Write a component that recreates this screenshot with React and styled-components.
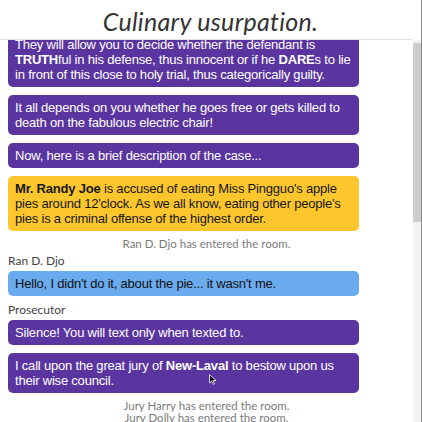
import React, { useEffect, useRef } from "react";
import styled, { createGlobalStyle, css } from "styled-components";

const messages = [
  {
    kind: "bubble",
    tone: "purple",
    text: (
      <>
        They will allow you to decide whether the defendant is <b>TRUTH</b>ful in
        his defense, thus innocent or if he <b>DARE</b>s to lie in front of this
        close to holy trial, thus categorically guilty.
      </>
    ),
  },
  {
    kind: "bubble",
    tone: "purple",
    text: "It all depends on you whether he goes free or gets killed to death on the fabulous electric chair!",
  },
  { kind: "bubble", tone: "purple", text: "Now, here is a brief description of the case..." },
  {
    kind: "bubble",
    tone: "yellow",
    text: (
      <>
        <b>Mr. Randy Joe</b> is accused of eating Miss Pingguo's apple pies around
        12'clock. As we all know, eating other people's pies is a criminal offense
        of the highest order.
      </>
    ),
  },
  { kind: "system", text: "Ran D. Djo has entered the room." },
  { kind: "label", text: "Ran D. Djo" },
  { kind: "bubble", tone: "blue", text: "Hello, I didn't do it, about the pie... it wasn't me." },
  { kind: "label", text: "Prosecutor" },
  { kind: "bubble", tone: "purple", text: "Silence! You will text only when texted to." },
  {
    kind: "bubble",
    tone: "purple",
    text: (
      <>
        I call upon the great jury of <b>New-Laval</b> to bestow upon us their wise
        council.
      </>
    ),
  },
  { kind: "system", text: "Jury Harry has entered the room." },
  { kind: "system", text: "Jury Dolly has entered the room." },
  { kind: "label", text: "Jury Harry" },
  { kind: "bubble", tone: "blue", text: "Guilty. Nobody eats a pie that fast and stays innocent." },
  { kind: "label", text: "Jury Dolly" },
  { kind: "bubble", tone: "blue", text: "I need to see the crumbs before I decide anything." },
  { kind: "label", text: "Prosecutor" },
  { kind: "bubble", tone: "purple", text: "The crumbs have been entered into evidence." },
  { kind: "bubble", tone: "purple", text: "Jury, please cast your verdict now." },
  { kind: "system", text: "Ran D. Djo has left the room." },
];

function App() {
  const scrollRef = useRef(null);

  // la conversation est deja un peu defilee dans la capture
  useEffect(() => {
    if (scrollRef.current) scrollRef.current.scrollTop = 8;
  }, []);

  return (
    <Page>
      <GlobalStyle />
      <Header>
        <Title>Culinary usurpation.</Title>
      </Header>
      <ChatArea>
        <ChatScroll ref={scrollRef}>
          <Messages>
            {messages.map((m, i) => {
              if (m.kind === "system") return <System key={i}>{m.text}</System>;
              if (m.kind === "label") return <Label key={i}>{m.text}</Label>;
              return (
                <Bubble key={i} $tone={m.tone}>
                  {m.text}
                </Bubble>
              );
            })}
          </Messages>
        </ChatScroll>
        <ScrollTrack>
          <ScrollThumb />
        </ScrollTrack>
      </ChatArea>
      <Cursor width="8" height="11" viewBox="0 0 8 11">
        <path d="M0.5 0.5 L0.5 9 L2.6 7 L4.2 10.4 L5.6 9.8 L4 6.5 L7 6.5 Z" fill="#111" stroke="#fff" strokeWidth="0.8" />
      </Cursor>
    </Page>
  );
}

export default App;

const GlobalStyle = createGlobalStyle`
  body {
    margin: 0;
    background: #fff;
    overflow: hidden;
  }
  b {
    font-weight: bold;
  }
`;

const Page = styled.div`
  position: relative;
  width: 421px;
  height: 422px;
  border-right: 1px solid #8c8c8c;
  display: flex;
  flex-direction: column;
  background: #fff;
`;

const Header = styled.header`
  height: 39px;
  margin-right: 8px;
  padding-left: 8px;
  border-bottom: 1px solid #e4e4e4;
  display: flex;
  justify-content: center;
  align-items: center;
`;

const Title = styled.h1`
  margin: 2px 0 0;
  font-family: "Lato", "Open Sans", sans-serif;
  font-style: italic;
  font-weight: 400;
  font-size: 25px;
  letter-spacing: 0.3px;
  color: #333;
`;

const ChatArea = styled.div`
  flex: 1;
  min-height: 0;
  display: flex;
`;

const ChatScroll = styled.div`
  flex: 1;
  overflow-y: scroll;
  scrollbar-width: none;

  &::-webkit-scrollbar {
    display: none;
  }
`;

const ScrollTrack = styled.div`
  width: 8px;
  background: #f3f3f3;
  padding-top: 3px;
`;

const ScrollThumb = styled.div`
  height: 179px;
  background: #cdcdcd;
`;

const Messages = styled.div`
  display: flex;
  flex-direction: column;
  min-height: 815px;
`;

const tones = {
  purple: css`
    background: #5a35a0;
    color: #fff;
  `,
  yellow: css`
    background: #fcc62c;
    color: #161616;
  `,
  blue: css`
    background: #6aaaee;
    color: #111;
  `,
};

const Label = styled.div`
  margin: 7px 0 3px 8px;
  font-family: "Lato", "Open Sans", sans-serif;
  font-size: 12px;
  line-height: 14px;
  color: #444;
`;

const System = styled.div`
  margin-top: 7px;
  text-align: center;
  font-family: "Lato", "Open Sans", sans-serif;
  font-size: 11.5px;
  line-height: 12px;
  color: #7a7a7a;

  & + & {
    margin-top: 0;
  }
  & + ${Label} {
    margin-top: 4px;
  }
`;

const Bubble = styled.div`
  width: 351px;
  box-sizing: border-box;
  margin: 8px 0 0 8px;
  padding: 5px 7px;
  border-radius: 5px;
  font-family: "Liberation Sans", Arial, sans-serif;
  font-size: 13px;
  letter-spacing: -0.2px;
  line-height: 15px;
  ${({ $tone }) => tones[$tone]}

  &:first-child,
  ${Label} + & {
    margin-top: 0;
  }
`;

const Cursor = styled.svg`
  position: absolute;
  left: 209px;
  top: 374px;
`;
